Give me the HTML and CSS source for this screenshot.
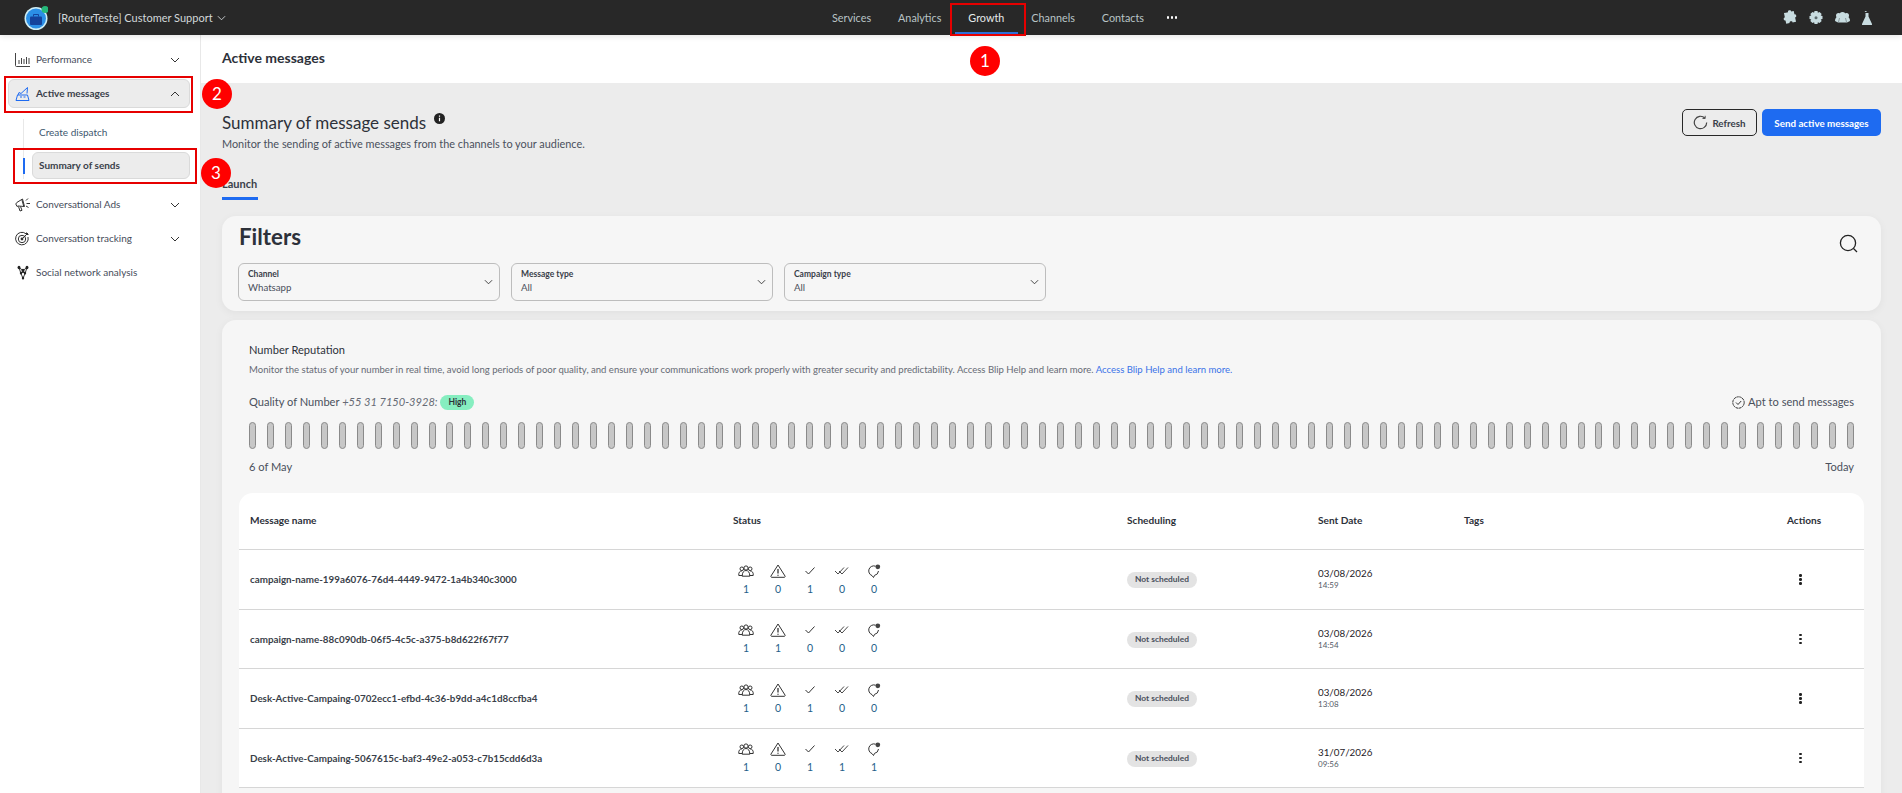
FILE: index.html
```html
<!DOCTYPE html>
<html>
<head>
    <meta charset="UTF-8">
    <meta name="viewport" content="width=device-width, initial-scale=1.0">
    <title>Summary of sends</title>
    <link rel="stylesheet" href="styles.css">
</head>

<body>
<svg class="sprites">
    <symbol id="chev" viewBox="0 0 10 6"><path d="M1 1l4 4 4-4" fill="none" stroke="currentColor" stroke-width="1"/></symbol>
    <symbol id="group" viewBox="0 0 16 12"><g fill="none" stroke="#333" stroke-width="1"><circle cx="3.800" cy="3.800" r="1.800"/><circle cx="12.200" cy="3.800" r="1.800"/><circle cx="8" cy="3" r="2.100"/><path d="M.8 10.500c-.4-3 1-4.500 3-4.500M15.200 10.500c.4-3-1-4.500-3-4.500M4.200 11.200c0-3.700 1.500-5.700 3.800-5.700s3.800 2 3.800 5.700zM.8 10.500h3.400M11.800 10.500h3.400"/></g></symbol>
    <symbol id="warn" viewBox="0 0 16 14"><path d="M8 1L1 12c-.4.700 0 1.300.7 1.300h12.600c.7 0 1.100-.6.700-1.300z" fill="none" stroke="#333" stroke-width="1" stroke-linejoin="round"/><path d="M8 5v4.500M8 10.700v1" stroke="#333" stroke-width="1.300"/></symbol>
    <symbol id="check" viewBox="0 0 12 10"><path d="M1.500 5l3 3 6-6.500" fill="none" stroke="#333" stroke-width="1"/></symbol>
    <symbol id="dcheck" viewBox="0 0 16 10"><path d="M1 5l3 3 6-6.500M5 5l3 3 6-6.500" fill="none" stroke="#333" stroke-width=".9"/></symbol>
    <symbol id="reply" viewBox="0 0 14 14"><path d="M8.500 2.200A5 5 0 1 0 5 11.600l1.500 1.900 1-2.100A5 5 0 0 0 11.500 7" fill="none" stroke="#333" stroke-width="1"/><circle cx="10.800" cy="2.800" r="2.400" fill="#444"/></symbol>
</svg>

<header class="topbar">
    <div class="brand">
        <svg class="logo" width="24" height="24" viewBox="0 0 24 24">
            <circle cx="12" cy="12.500" r="11.500" fill="#cfeef5"/>
            <circle cx="12" cy="12.500" r="10" fill="#2b8fe6"/>
            <rect x="6" y="10.500" width="12" height="8.500" rx="1" fill="#14439c"/>
            <path d="M9.500 10.500V8.500h5v2" fill="none" stroke="#14439c" stroke-width="1"/>
            <circle cx="21" cy="3.500" r="3.500" fill="#25b87a"/>
        </svg>
        <span>[RouterTeste] Customer Support</span>
        <svg class="chev" width="9" height="6"><use href="#chev"/></svg>
    </div>
    <nav class="mainnav">
        <a>Services</a>
        <a>Analytics</a>
        <a class="on">Growth</a>
        <a>Channels</a>
        <a>Contacts</a>
        <i class="dots"><b></b><b></b><b></b></i>
    </nav>
    <div class="tools">
        <svg width="15" height="15" viewBox="0 0 15 15"><path transform="rotate(-12 7.500 7.500)" d="M5 2h2.200c-.5-2 3.600-2 3.100 0H13v3.500c2-.5 2 3.500 0 3V13H9.500c.5-2-3.500-2-3 0H3V9.500c-2 .5-2-3.500 0-3V2z" fill="#c8dce0"/></svg>
        <svg width="14" height="14" viewBox="0 0 14 14"><path d="M5.500 0h3l.4 1.800 1.600-.9 2.200 2.100-1 1.600 1.800.4v3l-1.800.4 1 1.600-2.200 2.100-1.600-.9-.4 1.800h-3l-.4-1.800-1.600.9L1.300 10l1-1.600L.5 8V5l1.800-.4-1-1.600 2.200-2.100 1.600.9z" fill="#c8dce0"/><circle cx="7" cy="6.800" r="1.500" fill="#5d6b6e"/></svg>
        <svg width="15" height="11" viewBox="0 0 15 11"><circle cx="3.500" cy="3.500" r="2.500" fill="#c8dce0"/><circle cx="11.500" cy="3.500" r="2.500" fill="#c8dce0"/><circle cx="7.500" cy="3" r="3" fill="#c8dce0"/><path d="M0 9c0-3 1.500-4.500 3.500-4.500h8c2 0 3.500 1.500 3.500 4.500l-3 1.500H3z" fill="#c8dce0"/><path d="M4.500 6l-1 4M10.500 6l1 4" stroke="#5d6b6e" stroke-width=".6"/></svg>
        <svg width="10" height="14" viewBox="0 0 10 14"><path d="M2.500 0h2v1h-1zM3.500 2h3v3.500L10 13c.2.600-.1 1-.7 1H.7c-.6 0-.9-.4-.7-1l3.500-7.500z" fill="#c8dce0"/></svg>
    </div>
</header>

<div class="layout">
    <aside class="sidebar">
        <a class="side-item">
            <svg class="ico" width="15" height="14" viewBox="0 0 15 14"><path d="M.5 0v12.500c0 .6.400 1 1 1H15M4 7v4M6.500 5v6M9 6v5M11.500 4v7M14 5v6" fill="none" stroke="#444" stroke-width="1"/></svg>
            <span>Performance</span>
            <svg class="chev" width="10" height="6"><use href="#chev"/></svg>
        </a>
        <a class="side-item open">
            <svg class="ico" width="15" height="14" viewBox="0 0 15 14"><path d="M1 13.500h13L12.500 8h-10zM3 8l1-2.500 2 1L12.500.5l-.5 6" fill="none" stroke="#1e6bf1" stroke-width="1"/><path d="M5 10h2M8.500 10h2" stroke="#1e6bf1"/></svg>
            <span>Active messages</span>
            <svg class="chev up" width="10" height="6"><use href="#chev"/></svg>
        </a>
        <div class="subnav">
            <a class="sub-item">Create dispatch</a>
            <a class="sub-item current">Summary of sends</a>
        </div>
        <a class="side-item">
            <svg class="ico" width="15" height="15" viewBox="0 0 15 15"><path d="M.8 7l1-1.500L7.500 2l2 7.500-6.500-.5-1 .5zM3.500 9.500L5 14l2-.7-1.500-3.800M6.800 2.500l2 7" fill="none" stroke="#333" stroke-width="1"/><path d="M11 3.500l2-2M11.500 6.500H15M11 9l2.500 1.500" stroke="#333"/></svg>
            <span>Conversational Ads</span>
            <svg class="chev" width="10" height="6"><use href="#chev"/></svg>
        </a>
        <a class="side-item">
            <svg class="ico" width="15" height="15" viewBox="0 0 15 15"><g fill="none" stroke="#333"><path d="M11 2.800A6.300 6.300 0 1 0 13 6"/><circle cx="7" cy="8" r="3.700"/><path d="M7 8l6-6M11.500 1.500v2h2"/></g><circle cx="7" cy="8" r="1.400" fill="#333"/></svg>
            <span>Conversation tracking</span>
            <svg class="chev" width="10" height="6"><use href="#chev"/></svg>
        </a>
        <a class="side-item">
            <svg class="ico narrow" width="12" height="15" viewBox="0 0 15 15" preserveAspectRatio="none"><path d="M2.500 2.500l5 3 5-3-2 5-3 6-3-6zM5 7.500h5" fill="none" stroke="#222" stroke-width="1"/><g fill="#222"><circle cx="2.500" cy="2.500" r="1.800"/><circle cx="12.500" cy="2.500" r="1.800"/><circle cx="7.500" cy="5.500" r="1.800"/><circle cx="5" cy="8" r="1.500"/><circle cx="10" cy="8" r="1.500"/><circle cx="7.500" cy="13" r="1.500"/></g></svg>
            <span>Social network analysis</span>
        </a>
    </aside>

    <main class="main">
        <div class="page-title">Active messages</div>
        <div class="content">
            <section class="summary">
                <div>
                    <h1>Summary of message sends <svg width="11" height="11" viewBox="0 0 11 11"><circle cx="5.500" cy="5.500" r="5.500" fill="#222"/><path d="M5.500 4.800v3.400M5.500 2.500v1.200" stroke="#fff" stroke-width="1.200"/></svg></h1>
                    <p>Monitor the sending of active messages from the channels to your audience.</p>
                </div>
                <div class="actions">
                    <button class="btn ghost">
                        <svg width="15" height="15" viewBox="0 0 15 15"><path d="M11.800 3A6.200 6.200 0 1 0 13.700 7.500" fill="none" stroke="#444" stroke-width="1.200"/><path d="M12.200.8v2.700H9.500" fill="none" stroke="#444" stroke-width=".9"/></svg>
                        Refresh
                    </button>
                    <button class="btn solid">Send active messages</button>
                </div>
            </section>

            <div class="tabs"><span class="tab">Launch</span></div>

            <section class="card filters">
                <h2>Filters</h2>
                <div class="filter-row">
                    <div class="select"><label>Channel</label><span>Whatsapp</span><svg class="chev" width="9" height="6"><use href="#chev"/></svg></div>
                    <div class="select"><label>Message type</label><span>All</span><svg class="chev" width="9" height="6"><use href="#chev"/></svg></div>
                    <div class="select"><label>Campaign type</label><span>All</span><svg class="chev" width="9" height="6"><use href="#chev"/></svg></div>
                </div>
                <svg class="search" width="20" height="20" viewBox="0 0 20 20"><circle cx="9" cy="9" r="7.600" fill="none" stroke="#222" stroke-width="1.300"/><path d="M14.500 14.500l3.500 3.500" stroke="#222" stroke-width="1.300"/></svg>
            </section>

            <section class="card reputation">
                <div class="rep">
                    <h3>Number Reputation</h3>
                    <p class="rep-text">Monitor the status of your number in real time, avoid long periods of poor quality, and ensure your communications work properly with greater security and predictability. Access Blip Help and learn more. <a>Access Blip Help and learn more.</a></p>
                    <div class="rep-line">
                        <div>Quality of Number <em>+55 31 7150-3928:</em> <span class="high">High</span></div>
                        <div class="apt">
                            <svg width="13" height="13" viewBox="0 0 13 13"><circle cx="6.500" cy="6.500" r="5.700" fill="none" stroke="#333" stroke-width="1" stroke-dasharray="2.500 .5"/><path d="M4 6.500l2 2 3.200-3.500" fill="none" stroke="#333" stroke-width="1"/></svg>
                            Apt to send messages
                        </div>
                    </div>
                    <div class="bars">
                        <i></i><i></i><i></i><i></i><i></i><i></i><i></i><i></i><i></i><i></i>
                        <i></i><i></i><i></i><i></i><i></i><i></i><i></i><i></i><i></i><i></i>
                        <i></i><i></i><i></i><i></i><i></i><i></i><i></i><i></i><i></i><i></i>
                        <i></i><i></i><i></i><i></i><i></i><i></i><i></i><i></i><i></i><i></i>
                        <i></i><i></i><i></i><i></i><i></i><i></i><i></i><i></i><i></i><i></i>
                        <i></i><i></i><i></i><i></i><i></i><i></i><i></i><i></i><i></i><i></i>
                        <i></i><i></i><i></i><i></i><i></i><i></i><i></i><i></i><i></i><i></i>
                        <i></i><i></i><i></i><i></i><i></i><i></i><i></i><i></i><i></i><i></i>
                        <i></i><i></i><i></i><i></i><i></i><i></i><i></i><i></i><i></i><i></i>
                    </div>
                    <div class="bars-foot"><span>6 of May</span><span>Today</span></div>
                </div>

                <div class="table">
                    <div class="row head">
                        <div>Message name</div><div>Status</div><div>Scheduling</div><div>Sent Date</div><div>Tags</div><div>Actions</div>
                    </div>
                    <div class="row">
                        <div class="name">campaign-name-199a6076-76d4-4449-9472-1a4b340c3000</div>
                        <div class="stats">
                            <span><svg width="16" height="12"><use href="#group"/></svg><b>1</b></span>
                            <span><svg width="16" height="14"><use href="#warn"/></svg><b>0</b></span>
                            <span><svg width="12" height="10"><use href="#check"/></svg><b>1</b></span>
                            <span><svg width="16" height="10"><use href="#dcheck"/></svg><b>0</b></span>
                            <span><svg width="14" height="14"><use href="#reply"/></svg><b>0</b></span>
                        </div>
                        <div><span class="chip">Not scheduled</span></div>
                        <div class="date">03/08/2026<small>14:59</small></div>
                        <div></div>
                        <div class="kebab"><b></b><b></b><b></b></div>
                    </div>
                    <div class="row">
                        <div class="name">campaign-name-88c090db-06f5-4c5c-a375-b8d622f67f77</div>
                        <div class="stats">
                            <span><svg width="16" height="12"><use href="#group"/></svg><b>1</b></span>
                            <span><svg width="16" height="14"><use href="#warn"/></svg><b>1</b></span>
                            <span><svg width="12" height="10"><use href="#check"/></svg><b>0</b></span>
                            <span><svg width="16" height="10"><use href="#dcheck"/></svg><b>0</b></span>
                            <span><svg width="14" height="14"><use href="#reply"/></svg><b>0</b></span>
                        </div>
                        <div><span class="chip">Not scheduled</span></div>
                        <div class="date">03/08/2026<small>14:54</small></div>
                        <div></div>
                        <div class="kebab"><b></b><b></b><b></b></div>
                    </div>
                    <div class="row">
                        <div class="name">Desk-Active-Campaing-0702ecc1-efbd-4c36-b9dd-a4c1d8ccfba4</div>
                        <div class="stats">
                            <span><svg width="16" height="12"><use href="#group"/></svg><b>1</b></span>
                            <span><svg width="16" height="14"><use href="#warn"/></svg><b>0</b></span>
                            <span><svg width="12" height="10"><use href="#check"/></svg><b>1</b></span>
                            <span><svg width="16" height="10"><use href="#dcheck"/></svg><b>0</b></span>
                            <span><svg width="14" height="14"><use href="#reply"/></svg><b>0</b></span>
                        </div>
                        <div><span class="chip">Not scheduled</span></div>
                        <div class="date">03/08/2026<small>13:08</small></div>
                        <div></div>
                        <div class="kebab"><b></b><b></b><b></b></div>
                    </div>
                    <div class="row">
                        <div class="name">Desk-Active-Campaing-5067615c-baf3-49e2-a053-c7b15cdd6d3a</div>
                        <div class="stats">
                            <span><svg width="16" height="12"><use href="#group"/></svg><b>1</b></span>
                            <span><svg width="16" height="14"><use href="#warn"/></svg><b>0</b></span>
                            <span><svg width="12" height="10"><use href="#check"/></svg><b>1</b></span>
                            <span><svg width="16" height="10"><use href="#dcheck"/></svg><b>1</b></span>
                            <span><svg width="14" height="14"><use href="#reply"/></svg><b>1</b></span>
                        </div>
                        <div><span class="chip">Not scheduled</span></div>
                        <div class="date">31/07/2026<small>09:56</small></div>
                        <div></div>
                        <div class="kebab"><b></b><b></b><b></b></div>
                    </div>
                </div>
            </section>
        </div>
    </main>
</div>

<!-- tutorial marks drawn over the page -->
<div class="mark box-1"></div>
<div class="mark box-2"></div>
<div class="mark box-3"></div>
<div class="step step-1">1</div>
<div class="step step-2">2</div>
<div class="step step-3">3</div>
</body>
</html>
```

FILE: styles.css
```css
* {
    padding: 0;
    margin: 0;
    box-sizing: border-box;
}

html, body {
    height: 100%;
}

body {
    font-family: "Lato", "Noto Sans", sans-serif;
    font-size: 12px;
    color: #3a3f4a;
    background-color: #fff;
    overflow: hidden;
    position: relative;
}

.sprites {
    position: absolute;
    width: 0;
    height: 0;
}

.chev {
    color: #333;
    flex: none;
}

.chev.up {
    transform: rotate(180deg);
}

/* top bar */
.topbar {
    height: 35px;
    background-color: #282828;
    display: flex;
    align-items: center;
    position: relative;
    z-index: 2;
    box-shadow: 0 1px 6px rgba(0, 0, 0, 0.12);
}

.brand {
    flex: 0 0 832px;
    padding-left: 24px;
    display: flex;
    align-items: center;
    gap: 4px;
    color: #d2d8da;
    font-size: 11px;
}

.brand .logo {
    margin-right: 6px;
}

.brand .chev {
    color: #d2d8da;
}

.mainnav {
    display: flex;
    align-items: center;
    gap: 27px;
    height: 100%;
    font-size: 10.800px;
    color: #b9c4c6;
}

.mainnav a {
    position: relative;
    line-height: 35px;
}

.mainnav a.on {
    color: #e6ebec;
}

.mainnav a.on::after {
    content: '';
    position: absolute;
    left: -13px;
    right: -14px;
    bottom: 1px;
    height: 2px;
    background-color: #2d6fd8;
}

.dots {
    margin-left: -4px;
    display: flex;
    gap: 1.500px;
}

.dots b {
    width: 2.500px;
    height: 2.500px;
    border-radius: 50%;
    background-color: #fff;
}

.tools {
    margin-left: auto;
    margin-right: 30px;
    display: flex;
    align-items: center;
    gap: 12px;
}

/* sidebar */
.layout {
    display: flex;
    height: calc(100% - 35px);
}

.sidebar {
    flex: 0 0 201px;
    padding: 10px 10px 0 8px;
    border-right: 1px solid #e8e8e8;
    display: flex;
    flex-direction: column;
    gap: 5px;
    font-size: 10px;
    color: #464c5a;
}

.side-item {
    height: 29px;
    padding: 0 9px 0 6px;
    display: flex;
    align-items: center;
    gap: 6px;
    border: 1px solid transparent;
    border-radius: 6px;
}

.side-item span {
    flex: 1;
    padding-bottom: 2px;
}

.side-item .ico {
    flex: none;
}

.side-item .ico.narrow {
    margin: 0 1.500px;
}

.side-item.open {
    background-color: #ececec;
    border-color: #dadada;
    font-weight: 700;
    color: #3a3f4a;
}

.subnav {
    margin: 6px 0 6px 15px;
    padding-left: 8px;
    border-left: 1px solid #e8e8e8;
    display: flex;
    flex-direction: column;
    gap: 6px;
}

.sub-item {
    height: 27px;
    line-height: 25px;
    padding-left: 6px;
    border: 1px solid transparent;
    border-radius: 6px;
    position: relative;
    color: #40576e;
}

.sub-item.current {
    background-color: #ececec;
    border-color: #dadada;
    font-weight: 700;
    color: #3a3f4a;
}

.sub-item.current::before {
    content: '';
    position: absolute;
    left: -10px;
    top: 5px;
    width: 2px;
    height: 16px;
    background-color: #1e6bf1;
}

/* main */
.main {
    flex: 1;
    min-width: 0;
}

.page-title {
    height: 48px;
    padding: 14px 21px 0;
    font-size: 14px;
    font-weight: 700;
    color: #2d313a;
}

.content {
    height: 100%;
    background-color: #ececec;
    padding: 26px 21px 0 21px;
}

.summary {
    display: flex;
    justify-content: space-between;
    align-items: flex-start;
}

.summary h1 {
    margin-top: 2px;
    font-size: 17px;
    line-height: 24px;
    font-weight: 400;
    color: #2d313a;
}

.summary h1 svg {
    margin-left: 3px;
    vertical-align: 5px;
}

.summary p {
    margin-top: 1px;
    font-size: 10.900px;
    line-height: 16px;
    color: #4a505c;
}

.actions {
    display: flex;
    gap: 5px;
}

.btn {
    height: 27px;
    border-radius: 5px;
    font-family: inherit;
    font-size: 9.800px;
    font-weight: 700;
    display: flex;
    align-items: center;
    justify-content: center;
}

.btn.ghost {
    width: 75px;
    gap: 4px;
    background: transparent;
    border: 1px solid #282828;
    color: #3a3f4a;
}

.btn.solid {
    width: 119px;
    background-color: #1e6bf1;
    border: 0;
    color: #fff;
}

.tabs {
    margin-top: 23px;
}

.tab {
    display: block;
    width: 36px;
    height: 25px;
    line-height: 16px;
    padding-top: 1px;
    font-size: 11px;
    font-weight: 700;
    white-space: nowrap;
    color: #3a3f4a;
    border-bottom: 3px solid #1e6bf1;
}

.card {
    background-color: #f6f6f6;
    border-radius: 14px;
    box-shadow: 0 2px 8px rgba(0, 0, 0, 0.05);
}

.filters {
    margin-top: 16px;
    height: 95px;
    padding: 6px 17px 0 16px;
    position: relative;
}

.filters h2 {
    font-size: 22.300px;
    line-height: 30px;
    font-weight: 700;
    padding-left: 1px;
    color: #2d313a;
}

.filter-row {
    margin-top: 11px;
    display: flex;
    gap: 11px;
}

.select {
    width: 262px;
    height: 38px;
    padding: 4px 9px;
    border: 1px solid #bdbdbd;
    border-radius: 6px;
    position: relative;
}

.select label {
    display: block;
    font-size: 8.500px;
    line-height: 12px;
    font-weight: 700;
    color: #3a3f4a;
}

.select span {
    display: block;
    font-size: 9.700px;
    line-height: 14px;
    color: #4a505c;
}

.select .chev {
    position: absolute;
    right: 6px;
    top: 15px;
}

.search {
    position: absolute;
    right: 22px;
    top: 18px;
}

.reputation {
    margin-top: 9px;
    height: 600px;
    padding: 22px 17px 0;
}

.rep {
    padding: 0 10px;
}

.rep h3 {
    font-size: 11.100px;
    line-height: 16px;
    font-weight: 400;
    color: #2d313a;
}

.rep-text {
    margin-top: 5px;
    font-size: 9.560px;
    line-height: 14px;
    color: #666b75;
}

.rep-text a {
    color: #3a73e8;
}

.rep-line {
    margin-top: 17px;
    display: flex;
    justify-content: space-between;
    font-size: 11.100px;
    line-height: 16px;
    color: #4a505c;
}

.rep-line em {
    color: #666b75;
}

.high {
    display: inline-block;
    height: 15px;
    line-height: 14px;
    padding: 0 8px;
    border-radius: 8px;
    vertical-align: 1px;
    background-color: #86eec0;
    font-size: 8.500px;
    font-weight: 700;
    color: #2d313a;
}

.apt {
    display: flex;
    align-items: center;
    gap: 3px;
}

.bars {
    margin-top: 12px;
    display: flex;
    justify-content: space-between;
}

.bars i {
    width: 7px;
    height: 27px;
    background-color: #c7c7c7;
    border: 1px solid #8a8a8a;
    border-radius: 4px;
}

.bars-foot {
    margin-top: 10px;
    display: flex;
    justify-content: space-between;
    font-size: 11.100px;
    line-height: 16px;
    color: #4a505c;
}

/* table */
.table {
    margin-top: 18px;
    background-color: #fff;
    border-radius: 14px 14px 0 0;
}

.row {
    display: grid;
    grid-template-columns: 483px 394px 191px 146px 323px 1fr;
    height: 59.500px;
    align-items: center;
    padding-left: 11px;
    border-bottom: 1px solid #d6d6d6;
}

.row.head {
    height: 57px;
    padding-bottom: 3px;
    font-size: 10.100px;
    font-weight: 700;
    color: #2d313a;
}

.name {
    font-size: 9.800px;
    font-weight: 700;
    color: #3a3f4a;
}

.stats {
    display: flex;
    margin-left: -3px;
}

.stats span {
    width: 32px;
    display: flex;
    flex-direction: column;
    align-items: center;
}

.stats svg {
    height: 14px;
    margin-bottom: 5px;
}

.stats b {
    font-size: 10.500px;
    line-height: 12px;
    font-weight: 400;
    color: #1f5f8b;
}

.chip {
    display: inline-block;
    height: 16px;
    line-height: 15px;
    padding: 0 8px;
    border-radius: 8px;
    background-color: #e3e3e3;
    font-size: 8.400px;
    font-weight: 700;
    color: #4a505c;
}

.date {
    font-size: 9.800px;
    line-height: 13px;
    color: #1f2228;
}

.date small {
    display: block;
    font-size: 8px;
    line-height: 11px;
    color: #555b66;
}

.kebab {
    margin-left: 12px;
    display: flex;
    flex-direction: column;
    gap: 1.500px;
}

.kebab b {
    width: 2.500px;
    height: 2.500px;
    border-radius: 50%;
    background-color: #222;
}

/* tutorial marks */
.mark {
    position: absolute;
    border: 2px solid #e60000;
    z-index: 5;
}

.box-1 {
    left: 950px;
    top: 3px;
    width: 76px;
    height: 33px;
}

.box-2 {
    left: 4px;
    top: 76px;
    width: 189px;
    height: 37px;
}

.box-3 {
    left: 13px;
    top: 148px;
    width: 184px;
    height: 36px;
}

.step {
    position: absolute;
    width: 30px;
    height: 30px;
    border-radius: 50%;
    background-color: #f00;
    color: #fff;
    font-size: 17px;
    line-height: 30px;
    text-align: center;
    z-index: 5;
}

.step-1 {
    left: 970px;
    top: 46px;
}

.step-2 {
    left: 202px;
    top: 79px;
}

.step-3 {
    left: 201px;
    top: 158px;
}
```
